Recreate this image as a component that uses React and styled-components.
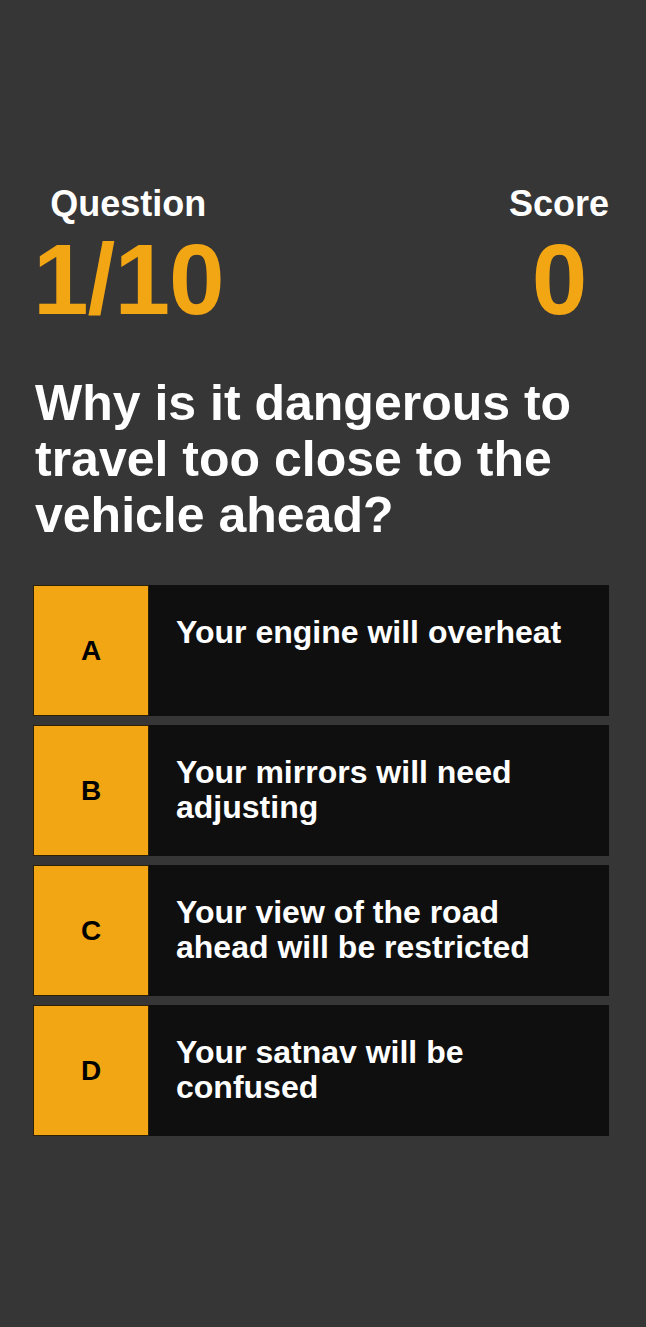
import React from "react";
import styled, { createGlobalStyle } from "styled-components";

const GlobalStyle = createGlobalStyle`
  html, body {
    margin: 0;
    padding: 0;
    background: #363636;
  }
  body {
    font-family: "Liberation Sans", Arial, Helvetica, sans-serif;
    -webkit-font-smoothing: antialiased;
  }
`;

const Page = styled.main`
  box-sizing: border-box;
  min-height: 100vh;
  padding: 184px 37px 40px 33px;
  background: #363636;
`;

const Header = styled.header`
  display: flex;
  justify-content: space-between;
  align-items: flex-start;
`;

const Stat = styled.div`
  display: flex;
  flex-direction: column;
  align-items: center;
`;

const StatLabel = styled.div`
  font-size: 36px;
  line-height: 40px;
  font-weight: 700;
  color: #ffffff;
`;

const StatValue = styled.div`
  margin-top: 5px;
  font-size: 100px;
  line-height: 100px;
  font-weight: 700;
  letter-spacing: -1px;
  color: #f3a614;
`;

const Question = styled.h1`
  margin: 46px 0 42px;
  padding-left: 2px;
  font-size: 50px;
  line-height: 56px;
  font-weight: 700;
  color: #ffffff;
`;

const Answers = styled.ol`
  list-style: none;
  margin: 0;
  padding: 0;
  display: flex;
  flex-direction: column;
  gap: 9px;
`;

const Answer = styled.li`
  display: flex;
  height: 131px;
  background: #0f0f0f;
`;

const Letter = styled.div`
  box-sizing: border-box;
  flex: 0 0 116px;
  display: flex;
  align-items: center;
  justify-content: center;
  background: #f3a614;
  border: 1px solid #2e2106;
  font-size: 28px;
  font-weight: 700;
  color: #000000;
`;

const AnswerText = styled.div`
  flex: 1;
  padding: 30px 28px 0 27px;
  font-size: 32px;
  line-height: 1.1;
  font-weight: 700;
  color: #ffffff;
`;

const answers = [
  { letter: "A", text: "Your engine will overheat" },
  { letter: "B", text: "Your mirrors will need adjusting" },
  { letter: "C", text: "Your view of the road ahead will be restricted" },
  { letter: "D", text: "Your satnav will be confused" },
];

export default function App() {
  return (
    <>
      <GlobalStyle />
      <Page>
        <Header>
          <Stat>
            <StatLabel>Question</StatLabel>
            <StatValue>1/10</StatValue>
          </Stat>
          <Stat>
            <StatLabel>Score</StatLabel>
            <StatValue>0</StatValue>
          </Stat>
        </Header>
        <Question>Why is it dangerous to travel too close to the vehicle ahead?</Question>
        <Answers>
          {answers.map((a) => (
            <Answer key={a.letter}>
              <Letter>{a.letter}</Letter>
              <AnswerText>{a.text}</AnswerText>
            </Answer>
          ))}
        </Answers>
      </Page>
    </>
  );
}
